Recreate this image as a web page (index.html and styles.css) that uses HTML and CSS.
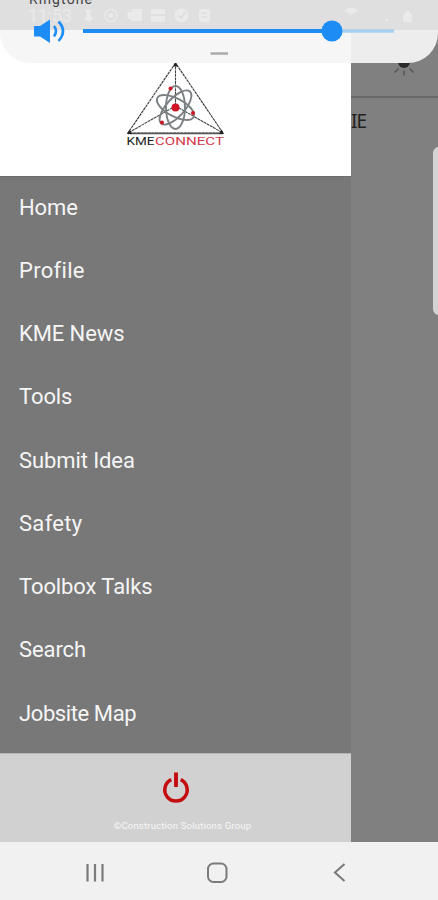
FILE: index.html
```
<!DOCTYPE html>
<html lang="en">
<head>
  <meta charset="UTF-8">
  <meta name="viewport" content="width=device-width, initial-scale=1">
  <title>KME Connect</title>
  <link rel="stylesheet" href="styles.css">
</head>
<body>

  <div class="phone">

    <div class="screen">

      <!-- Side menu -->
      <aside class="drawer">
        <div class="logo">
          <svg width="102" height="92" viewBox="0 0 102 92">
            <g fill="none" stroke="#333" stroke-width="1.1">
              <path d="M51.500 7L4 77H99Z" stroke-dasharray="3 .6"/>
              <path d="M51.500 7V50L4 77M51.500 50L99 77" stroke="#444" stroke-dasharray="3 .6"/>
              <path d="M4 77.500H99" stroke="#555" stroke-width="1.500"/>
            </g>
            <path d="M49 10.500L51.500 6L54 10.500ZM3 78L5.500 73.500L8 78ZM100 78L97.500 73.500L95 78Z" fill="#222"/>
            <g fill="none" stroke="#7b8083" stroke-width="1.900">
              <ellipse cx="51.500" cy="51.500" rx="9.500" ry="21.500"/>
              <ellipse cx="51.500" cy="51.500" rx="9" ry="20.500" transform="rotate(-62 51.500 51.500)"/>
              <ellipse cx="51.500" cy="51.500" rx="9" ry="21.500" transform="rotate(42 51.500 51.500)"/>
            </g>
            <g fill="#cf1626">
              <circle cx="51.500" cy="51.500" r="4"/>
              <circle cx="46.500" cy="32.500" r="2"/>
              <circle cx="69" cy="57" r="2"/>
              <circle cx="38" cy="66.500" r="2"/>
            </g>
            <text class="logo-text" x="2.500" y="88.500" textLength="28" lengthAdjust="spacingAndGlyphs" fill="#222">KME</text>
            <text class="logo-text" x="31" y="88.500" textLength="69" lengthAdjust="spacingAndGlyphs" fill="#d33a4d">CONNECT</text>
          </svg>
        </div>

        <nav class="menu">
          <a class="item">Home</a>
          <a class="item wide">Profile</a>
          <a class="item">KME News</a>
          <a class="item">Tools</a>
          <a class="item">Submit Idea</a>
          <a class="item wide">Safety</a>
          <a class="item">Toolbox Talks</a>
          <a class="item">Search</a>
          <a class="item narrow">Jobsite Map</a>
        </nav>

        <div class="drawer-footer">
          <svg width="30" height="34" viewBox="0 0 30 34" fill="none" stroke="#c40d10">
            <path d="M10.300 9.700A11.200 11.200 0 1 0 19.700 9.700" stroke-width="3.500"/>
            <path d="M15 2.500V17" stroke-width="3.900"/>
          </svg>
          <p class="copyright">©Construction Solutions Group</p>
        </div>
      </aside>

      <!-- Dimmed page behind the menu -->
      <main class="page">
        <div class="page-header">
          <svg width="30" height="24" viewBox="0 0 30 24">
            <circle cx="15" cy="6" r="6" fill="#2b2b2b"/>
            <path d="M15 14.500V19.500M9.500 12.500L5.500 16.500M20.500 12.500L24.500 16.500" stroke="#555" stroke-width="1.500"/>
          </svg>
        </div>
        <div class="page-title">IE</div>
        <div class="edge-handle"></div>
      </main>

      <!-- Volume panel -->
      <div class="volume">
        <div class="status"></div>
        <svg class="volume-art" width="438" height="63" viewBox="0 0 438 63">
          <g fill="#eaeaea">
            <text class="clock" x="28" y="22" textLength="44">11:53</text>
            <path d="M85 10H92L90 15L93 19L89 22L84 19L87 15Z"/>
            <circle cx="111" cy="15.500" r="6" fill="none" stroke="#eaeaea" stroke-width="1.500"/>
            <circle cx="111" cy="15.500" r="2.500"/>
            <path d="M128 12H132V9H142V21H132L127 17Z"/>
            <path d="M151 9H165V14H151ZM151 16H165V22H151Z"/>
            <circle cx="181.500" cy="15.500" r="7"/>
            <rect x="199" y="9" width="11" height="13" rx="3"/>
            <path d="M344 11Q351 4 358 11L351 15Z"/>
            <path d="M388 18L385 21H388Z"/>
            <path d="M404 14L408 10L412 15V22H403V15Z"/>
          </g>
          <path d="M178 15L181 18L186 11M202 13H207M202 17H207" fill="none" stroke="#dedede" stroke-width="1.500"/>
          <text class="ringtone" x="29" y="4" textLength="63">Ringtone</text>
          <path d="M34 26H40L50 19.500V43L40 36.500H34Z" fill="#1d8df5"/>
          <path d="M54 26Q58 31 54 36.500M58.500 21.500Q67.500 31 58.500 41" fill="none" stroke="#1d8df5" stroke-width="2.600"/>
          <path d="M332 31H394" stroke="#a9cff2" stroke-width="3.400"/>
          <path d="M83 31H332" stroke="#1d8df5" stroke-width="3.800"/>
          <circle cx="332" cy="31" r="10.500" fill="#1d8df5"/>
          <path d="M210.500 53.500H228" stroke="#aaa" stroke-width="2.300"/>
        </svg>
      </div>

    </div>

    <!-- Android buttons -->
    <footer class="navbar">
      <svg width="24" height="24" viewBox="0 0 24 24" fill="none" stroke="#7b7b7b" stroke-width="2.200">
        <path d="M4.500 3V20.500M12 3V20.500M19.500 3V20.500"/>
      </svg>
      <svg width="24" height="24" viewBox="0 0 24 24" fill="none" stroke="#7b7b7b" stroke-width="2">
        <rect x="3" y="2.500" width="18.500" height="18.500" rx="5.500"/>
      </svg>
      <svg width="24" height="24" viewBox="0 0 24 24" fill="none" stroke="#7b7b7b" stroke-width="2.100">
        <path d="M17.500 3L8 11.500L17.500 20"/>
      </svg>
    </footer>

  </div>

</body>
</html>
```
FILE: styles.css
```
* {
  box-sizing: border-box;
}

body {
  margin: 0;
  font-family: Roboto, "Noto Sans", sans-serif;
  background: #f1f1f1;
}

.phone {
  width: 438px;
  height: 900px;
  display: flex;
  flex-direction: column;
  overflow: hidden;
}

.screen {
  position: relative;
  flex: 1;
  display: flex;
  min-height: 0;
}

/* side menu */
.drawer {
  width: 351px;
  display: flex;
  flex-direction: column;
  background: #787878;
}

.logo {
  height: 176px;
  padding: 56px 1px 0 0;
  display: flex;
  justify-content: center;
  background: #fff;
}

.logo-text {
  font-size: 10.5px;
}

.menu {
  flex: 1;
  border-top: 1px solid #6c6c6c;
}

.item {
  display: flex;
  align-items: center;
  height: 63.25px;
  padding: 0 0 3px 19px;
  font-size: 22px;
  letter-spacing: -0.1px;
  color: #f5f5f5;
}

.wide {
  letter-spacing: 0.3px;
}

.narrow {
  letter-spacing: -0.4px;
}

.drawer-footer {
  height: 89px;
  padding-top: 16px;
  display: flex;
  flex-direction: column;
  align-items: center;
  background: #d1d1d1;
  border-top: 1px solid #b5b5b5;
}

.copyright {
  margin: 16px 0 0 14px;
  font-size: 9.5px;
  line-height: 12px;
  letter-spacing: 0.2px;
  color: #f7f7f7;
}

/* page behind */
.page {
  position: relative;
  flex: 1;
  background: #808080;
  overflow: hidden;
}

.page-header {
  height: 98px;
  padding: 56px 19px 0 0;
  text-align: right;
  border-bottom: 2px solid #696969;
}

.page-title {
  padding-top: 11px;
  font-family: "Noto Sans", sans-serif;
  font-size: 19px;
  line-height: 25px;
  letter-spacing: -1px;
  color: #222;
}

.edge-handle {
  position: absolute;
  top: 147px;
  right: -7px;
  width: 12px;
  height: 168px;
  border-radius: 6px;
  background: #d3d3d3;
}

/* volume panel lies over everything */
.volume {
  position: absolute;
  top: 0;
  left: 0;
  width: 438px;
  height: 63px;
  border-radius: 0 0 30px 30px;
  background: linear-gradient(90deg, #f6f6f6 351px, #ededed 351px);
  overflow: hidden;
}

.status {
  height: 30px;
  background: #dfdfdf;
}

.volume-art {
  position: absolute;
  top: 0;
  left: 0;
}

.clock {
  font-size: 18px;
}

.ringtone {
  font-size: 14px;
  fill: #444;
}

/* android buttons */
.navbar {
  height: 58px;
  display: flex;
  align-items: center;
  padding: 3px 0 0 83px;
  gap: 98px;
  background: #f1f1f1;
}
```
